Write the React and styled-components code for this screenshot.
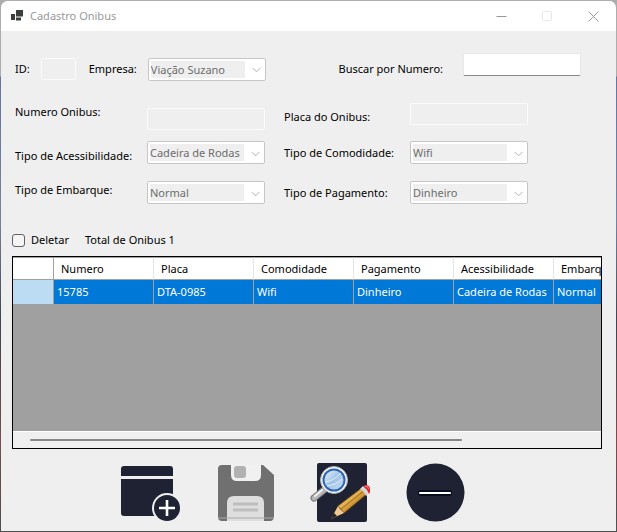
import React, { useId } from "react";
import styled, { createGlobalStyle } from "styled-components";

const GlobalStyle = createGlobalStyle`
  * { box-sizing: border-box; }
  body { margin: 0; }
  body, button, input, select {
    font-family: "Noto Sans", "Open Sans", sans-serif;
    font-size: 11px;
    line-height: 18px;
  }
`;

const Desktop = styled.div`
  display: flex;
  min-height: 100vh;
  padding: 1px;
  background: linear-gradient(#adadad 0 76px, #62779f 77px, #7684a0 220px, #3f4450 320px, #7a4c4c 440px, #4f4f4f 531px);
`;

const Window = styled.main`
  display: flex;
  flex: 1;
  flex-direction: column;
  min-width: 0;
  overflow: hidden;
  border-radius: 7px 7px 0 0;
  background: #efefef;
  color: #000;
`;

const TitleBar = styled.header`
  display: flex;
  align-items: center;
  height: 30px;
  padding-left: 10px;
  gap: 7px;
  background: #fff;
`;

const Title = styled.h1`
  flex: 1;
  margin: 0;
  color: #999;
  font-size: 11px;
  font-weight: 400;
`;

const CaptionButtons = styled.div`
  display: flex;
`;

const CaptionButton = styled.button`
  display: grid;
  place-items: center;
  width: 46px;
  height: 30px;
  margin: 0;
  padding: 0;
  border: 0;
  background: transparent;
  color: #999;

  &:disabled { color: #e6e6e6; }
`;

const SearchRow = styled.div`
  display: flex;
  align-items: center;
  height: 32px;
  margin-top: 22px;
  padding: 0 35px 0 14px;
`;

const FieldGroup = styled.div`
  display: flex;
  align-items: center;
  gap: 11px;
  margin-right: 13px;
`;

const SearchGroup = styled.div`
  display: flex;
  align-items: center;
  align-self: stretch;
  gap: 20px;
  margin-left: auto;
`;

const Label = styled.label`
  align-self: ${(p) => p.$align || "center"};
  line-height: ${(p) => (p.$tall ? "23px" : "18px")};
  white-space: nowrap;
`;

const TextBox = styled.input`
  align-self: ${(p) => p.$align || "center"};
  width: ${(p) => p.$width || "100%"};
  height: 22px;
  padding: 2px 4px;
  border: 1px solid #fafafa;
  border-radius: 2px;
  background: #efefef;
  outline: 0;
`;

const SearchBox = styled.input`
  align-self: flex-start;
  width: 118px;
  height: 23px;
  padding: 2px 4px;
  border: 1px solid #e8e8e8;
  border-bottom-color: #868686;
  border-radius: 2px;
  background: #fff;
  outline: 0;
`;

const Combo = styled.div`
  display: flex;
  align-items: center;
  width: ${(p) => p.$width || "100%"};
  height: 23px;
  padding: 2px 3px 2px 2px;
  border: 1px solid #c6c6c6;
  border-radius: 2px;
  background: #fff;
`;

const ComboSelect = styled.select`
  flex: 1;
  min-width: 0;
  height: 17px;
  padding: 0;
  border: 0;
  border-radius: 0;
  appearance: none;
  background: #efefef;
  color: #6d6d6d;
  line-height: 17px;
  opacity: 1;
  overflow: hidden;
`;

const ComboArrow = styled.svg`
  flex: none;
  width: 9px;
  height: 6px;
  margin: 2px 1px 0 7px;
`;

const Fields = styled.div`
  display: grid;
  grid-template-columns: 132px minmax(0, 137fr) 126px minmax(0, 118fr);
  grid-template-rows: 27px 29px 23px;
  row-gap: 11px;
  margin-top: 18px;
  padding: 0 88px 0 14px;
`;

const Cell = styled.div`
  display: flex;
  align-items: flex-start;
  padding-right: ${(p) => p.$gutter || "0"};
`;

const GridSummary = styled.div`
  display: flex;
  align-items: center;
  gap: 16px;
  margin-top: 27px;
  padding-left: 11px;
`;

const CheckLabel = styled.label`
  display: flex;
  align-items: center;
  gap: 6px;
`;

const CheckBox = styled.input`
  width: 13px;
  height: 13px;
  margin: 0;
  border: 1px solid #626262;
  border-radius: 3px;
  appearance: none;
  background: #f5f5f5;

  &:checked { background: #0078d7; }
`;

const DataGrid = styled.section`
  display: flex;
  flex: 1;
  flex-direction: column;
  min-height: 120px;
  margin: 7px 14px 0 11px;
  border: 1px solid #000;
  background: #a0a0a0;
`;

const GridBody = styled.div`
  flex: 1;
  overflow: hidden;
`;

const Table = styled.table`
  width: 641px;
  border-collapse: separate;
  border-spacing: 0;
  table-layout: fixed;
`;

const HeaderCell = styled.th`
  width: ${(p) => (p.$corner ? "41px" : "100px")};
  height: 23px;
  padding: 1px 0 0 7px;
  border-top: 1px solid #a0a0a0;
  border-right: 1px solid ${(p) => (p.$corner ? "#a0a0a0" : "#e5e5e5")};
  border-bottom: 1px solid #a0a0a0;
  background: #fff;
  font-weight: 400;
  text-align: left;
`;

const DataCell = styled.td`
  height: 25px;
  padding: 0 0 0 3px;
  border-right: 1px solid #a0a0a0;
  border-bottom: 1px solid #a0a0a0;
  background: #0078d7;
  color: #fff;
  white-space: nowrap;
`;

const RowHeader = styled.th`
  padding: 0;
  border-right: 1px solid #a0a0a0;
  border-bottom: 1px solid #a0a0a0;
  background: #bcdcf4;
`;

const ScrollTrack = styled.div`
  display: flex;
  align-items: center;
  height: 17px;
  padding: 0 17px;
  border-top: 1px solid #fff;
  background: #efefef;
`;

const ScrollThumb = styled.div`
  width: 78%;
  height: 2px;
  border-radius: 1px;
  background: #868686;
`;

const Toolbar = styled.nav`
  display: flex;
  justify-content: center;
  gap: 35px;
  padding: 14px 32px 8px 0;
`;

const ToolButton = styled.button`
  width: 60px;
  height: 60px;
  padding: 0;
  border: 0;
  background: transparent;

  svg { display: block; }
`;

const NAVY = "#1f2233";

function AppIcon() {
  return (
    <svg width="12" height="12" viewBox="0 0 12 12" fill="#3d3d3d" aria-hidden="true">
      <path d="M5 0h7v6.5H5zM0 4h4v6H0zM5 7.5h5v3H5z" />
    </svg>
  );
}

function AddIcon() {
  return (
    <svg width="60" height="60" viewBox="0 0 60 60" aria-hidden="true">
      <path d="M1 13V6q0-3 3-3h46q3 0 3 3v7z" fill={NAVY} />
      <path d="M1 16h52v36q0 1-1 1H4q-3 0-3-3z" fill={NAVY} />
      <circle cx="47" cy="45" r="15" fill="#efefef" />
      <circle cx="47" cy="45" r="13" fill={NAVY} />
      <path d="M47 37v16M39 45h16" stroke="#fff" strokeWidth="2.6" />
    </svg>
  );
}

function SaveIcon() {
  return (
    <svg width="60" height="60" viewBox="0 0 60 60" aria-hidden="true">
      <path d="M7 2h41l11 10v41q0 5-4 5H7q-4 0-4-4V6q0-4 4-4z" fill="#707070" />
      <path d="M16 2h30v10q0 6-6 6H22q-6 0-6-6z" fill="#f1f1f1" />
      <rect x="19" y="3" width="12" height="12" rx="3" fill="#b2b2b2" />
      <path d="M12 58V40q0-7 7-7h23q7 0 7 7v18z" fill="#dedede" />
      <path d="M18 41h25M18 47h25" stroke="#bebebe" strokeWidth="3" />
      <path d="M3 55h56" stroke="#aaa" strokeWidth="1" />
    </svg>
  );
}

function SearchEditIcon() {
  const id = useId();
  return (
    <svg width="60" height="60" viewBox="0 0 60 60" aria-hidden="true">
      <defs>
        <linearGradient id={`${id}-glass`} x1="0" y1="0" x2="1" y2="1">
          <stop offset="0" stopColor="#edf5fc" />
          <stop offset="0.5" stopColor="#9fc2e6" />
          <stop offset="1" stopColor="#cfe3f6" />
        </linearGradient>
        <linearGradient id={`${id}-wood`} x1="0" y1="0" x2="1" y2="1">
          <stop offset="0.3" stopColor="#f3cb74" />
          <stop offset="0.55" stopColor="#d59a35" />
          <stop offset="0.75" stopColor="#9a6420" />
        </linearGradient>
      </defs>
      <rect x="7" y="0" width="50" height="59" rx="2" fill={NAVY} />
      <path d="M14 27L4 35" stroke="#777" strokeWidth="7" strokeLinecap="round" />
      <path d="M14 27L4 35" stroke="#b6b6b6" strokeWidth="5" strokeLinecap="round" />
      <path d="M12 27L5 33" stroke="#efefef" strokeWidth="2" strokeLinecap="round" />
      <circle cx="24" cy="17" r="13.5" fill="#f5f7f8" stroke="#aab1b8" />
      <circle cx="24" cy="17" r="10.5" fill={`url(#${id}-glass)`} stroke="#2f66b3" strokeWidth="2" />
      <path d="M15 19q9-1 16-9M17 23q9-1 15-7" stroke="#e6f1fb" strokeWidth="1" fill="none" />
      <path d="M28 43L53 24l5 6-24 20z" fill={`url(#${id}-wood)`} stroke="#75501b" strokeWidth="0.8" />
      <path d="M31 46l24-19" stroke="#805219" strokeWidth="0.8" />
      <path d="M21 56l7-13 2 3 4 4z" fill="#efc98d" />
      <path d="M21 56l3-6 3 3z" fill="#202020" />
      <path d="M50 26l3-3q4 2 6 7l-3 3q-2-5-6-7z" fill="#d5d9dc" />
      <path d="M53 23l3-1q3 0 4 3v4l-1 2q-2-5-6-8z" fill="#df2932" />
      <path d="M55 23q3 0 4 3" stroke="#ff8b85" strokeWidth="1" fill="none" />
    </svg>
  );
}

function RemoveIcon() {
  return (
    <svg width="60" height="60" viewBox="0 0 60 60" aria-hidden="true">
      <circle cx="30.5" cy="29.5" r="29" fill={NAVY} />
      <rect x="13" y="27" width="34" height="6" rx="3" fill="#060b1c" />
      <rect x="14" y="29" width="32" height="2" rx="1" fill="#fff" />
    </svg>
  );
}

function ComboBox({ id, value, width }) {
  return (
    <Combo $width={width}>
      <ComboSelect id={id} defaultValue={value} disabled>
        <option>{value}</option>
      </ComboSelect>
      <ComboArrow viewBox="0 0 9 6" fill="none" stroke="#b4b4b4" aria-hidden="true">
        <path d="M0.5 0.8L4.5 4.8L8.5 0.8" />
      </ComboArrow>
    </Combo>
  );
}

const COLUMNS = ["Numero", "Placa", "Comodidade", "Pagamento", "Acessibilidade", "Embarque"];
const ROWS = [["15785", "DTA-0985", "Wifi", "Dinheiro", "Cadeira de Rodas", "Normal"]];

const TOOLS = [
  { label: "Adicionar", Icon: AddIcon },
  { label: "Salvar", Icon: SaveIcon, disabled: true },
  { label: "Pesquisar e editar", Icon: SearchEditIcon },
  { label: "Remover", Icon: RemoveIcon },
];

export default function App() {
  return (
    <>
      <GlobalStyle />
      <Desktop>
        <Window>
          <TitleBar>
            <AppIcon />
            <Title>Cadastro Onibus</Title>
            <CaptionButtons>
              <CaptionButton aria-label="Minimizar">
                <svg width="11" height="11" viewBox="0 0 11 11" stroke="currentColor"><path d="M0.5 5.5h10" /></svg>
              </CaptionButton>
              <CaptionButton aria-label="Maximizar" disabled>
                <svg width="11" height="11" viewBox="0 0 11 11" stroke="currentColor" fill="none"><rect x="0.5" y="0.5" width="9" height="9" rx="1" /></svg>
              </CaptionButton>
              <CaptionButton aria-label="Fechar">
                <svg width="11" height="11" viewBox="0 0 11 11" stroke="currentColor"><path d="M0.5 0.5l10 10M10.5 0.5l-10 10" /></svg>
              </CaptionButton>
            </CaptionButtons>
          </TitleBar>

          <SearchRow>
            <FieldGroup>
              <Label htmlFor="bus-id">ID:</Label>
              <TextBox id="bus-id" $width="35px" disabled />
            </FieldGroup>
            <FieldGroup>
              <Label htmlFor="company">Empresa:</Label>
              <ComboBox id="company" value="Viação Suzano" width="118px" />
            </FieldGroup>
            <SearchGroup>
              <Label htmlFor="search">Buscar por Numero:</Label>
              <SearchBox id="search" type="text" />
            </SearchGroup>
          </SearchRow>

          <Fields>
            <Label htmlFor="number" $align="start">Numero Onibus:</Label>
            <Cell $gutter="19px"><TextBox id="number" $align="flex-end" disabled /></Cell>
            <Label htmlFor="plate" $tall>Placa do Onibus:</Label>
            <Cell><TextBox id="plate" $align="flex-start" disabled /></Cell>

            <Label htmlFor="accessibility">Tipo de Acessibilidade:</Label>
            <Cell $gutter="19px"><ComboBox id="accessibility" value="Cadeira de Rodas" /></Cell>
            <Label htmlFor="amenity" $align="start" $tall>Tipo de Comodidade:</Label>
            <Cell><ComboBox id="amenity" value="Wifi" /></Cell>

            <Label htmlFor="boarding" $align="start">Tipo de Embarque:</Label>
            <Cell $gutter="19px"><ComboBox id="boarding" value="Normal" /></Cell>
            <Label htmlFor="payment" $align="start" $tall>Tipo de Pagamento:</Label>
            <Cell><ComboBox id="payment" value="Dinheiro" /></Cell>
          </Fields>

          <GridSummary>
            <CheckLabel>
              <CheckBox type="checkbox" />
              Deletar
            </CheckLabel>
            <span>Total de Onibus 1</span>
          </GridSummary>

          <DataGrid>
            <GridBody>
              <Table>
                <thead>
                  <tr>
                    <HeaderCell $corner aria-label="Linha" />
                    {COLUMNS.map((name) => <HeaderCell key={name}>{name}</HeaderCell>)}
                  </tr>
                </thead>
                <tbody>
                  {ROWS.map((row) => (
                    <tr key={row[0]}>
                      <RowHeader scope="row" aria-label={row[0]} />
                      {row.map((value, i) => <DataCell key={COLUMNS[i]}>{value}</DataCell>)}
                    </tr>
                  ))}
                </tbody>
              </Table>
            </GridBody>
            <ScrollTrack>
              <ScrollThumb />
            </ScrollTrack>
          </DataGrid>

          <Toolbar>
            {TOOLS.map(({ label, Icon, disabled }) => (
              <ToolButton key={label} aria-label={label} disabled={disabled}>
                <Icon />
              </ToolButton>
            ))}
          </Toolbar>
        </Window>
      </Desktop>
    </>
  );
}
